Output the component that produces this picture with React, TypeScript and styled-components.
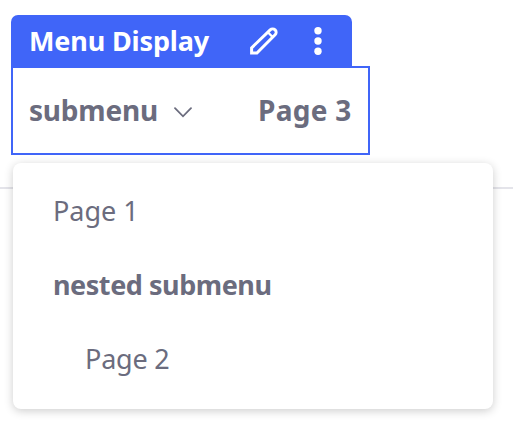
import React from 'react';
import styled, { createGlobalStyle } from 'styled-components';

const GlobalStyle = createGlobalStyle`
  * { box-sizing: border-box; }
  body {
    margin: 0;
    background: #fff;
    color: #6b6c7e;
    font-family: "Noto Sans", sans-serif;
    font-size: 27px;
    line-height: 42px;
    overflow: hidden;
  }
`;

const Page = styled.main`
  width: 513px;
  height: 432px;
  overflow: hidden;
`;

const Section = styled.section`
  position: relative;
  height: 189px;
  padding: 15px 0 0 11px;
  border-bottom: 2px solid #e4e4ea;
`;

const Topper = styled.header`
  display: flex;
  align-items: center;
  width: 341px;
  height: 51px;
  padding: 1px 0 0 18px;
  border-radius: 7px 7px 0 0;
  background: #4065f8;
  color: #fff;
`;

const Label = styled.span<{ $bold?: boolean; $size?: number; $spacing?: number }>`
  font-size: ${({ $size = 27 }) => $size}px;
  font-weight: ${({ $bold }) => ($bold ? 700 : 400)};
  letter-spacing: ${({ $spacing = 0 }) => $spacing}px;
  white-space: nowrap;
`;

const TopperTitle = styled(Label)`
  width: 221px;
`;

const TopperActions = styled.div`
  display: flex;
  align-items: center;
  gap: 36px;
`;

const Navigation = styled.nav`
  display: flex;
  align-items: center;
  width: 359px;
  height: 89px;
  padding: 0 0 2px 16px;
  border: 2px solid #4065f8;
`;

const Trigger = styled.div`
  display: flex;
  align-items: center;
  width: 229px;
`;

const TriggerLabel = styled(Label)`
  width: 145px;
`;

const Chevron = styled.svg`
  margin-top: 6px;
`;

const Dropdown = styled.ul`
  position: absolute;
  top: 163px;
  left: 13px;
  width: 480px;
  height: 246px;
  margin: 0;
  padding: 11px 40px;
  list-style: none;
  border-radius: 8px;
  background: #fff;
  box-shadow: 0 2px 10px rgba(0, 0, 0, 0.2);
`;

const Item = styled.li<{ $nested?: boolean }>`
  display: flex;
  align-items: center;
  height: 74px;
  padding-left: ${({ $nested }) => ($nested ? 32 : 0)}px;
`;

export default function App() {
  return (
    <Page>
      <GlobalStyle />
      <Section>
        <Topper>
          <TopperTitle $bold $spacing={-0.15}>Menu Display</TopperTitle>
          <TopperActions>
            <svg width="28" height="28" viewBox="0 0 28 28" fill="none" stroke="#fff" strokeWidth="3">
              <path d="M1.6 26v-5.2L20.2 2.9a3.4 3.4 0 0 1 4.9 4.9L6.9 26z" />
              <path d="M17.6 5l5.4 5.4" strokeWidth="2.2" />
            </svg>
            <svg width="8" height="28" viewBox="0 0 8 28" fill="#fff">
              <circle cx="4" cy="3.7" r="3.7" />
              <circle cx="4" cy="14" r="3.7" />
              <circle cx="4" cy="24.3" r="3.7" />
            </svg>
          </TopperActions>
        </Topper>
        <Navigation>
          <Trigger>
            <TriggerLabel $bold $size={28} $spacing={-0.2}>submenu</TriggerLabel>
            <Chevron width="18" height="11" viewBox="0 0 18 11" fill="none" stroke="#6b6c7e" strokeWidth="1.8" strokeLinecap="round">
              <path d="M1 1.2L9 9.3L17 1.2" />
            </Chevron>
          </Trigger>
          <Label $bold $size={28} $spacing={0.3}>Page 3</Label>
        </Navigation>
        <Dropdown>
          <Item><Label>Page 1</Label></Item>
          <Item><Label $bold $spacing={-0.45}>nested submenu</Label></Item>
          <Item $nested><Label $spacing={-0.2}>Page 2</Label></Item>
        </Dropdown>
      </Section>
    </Page>
  );
}
